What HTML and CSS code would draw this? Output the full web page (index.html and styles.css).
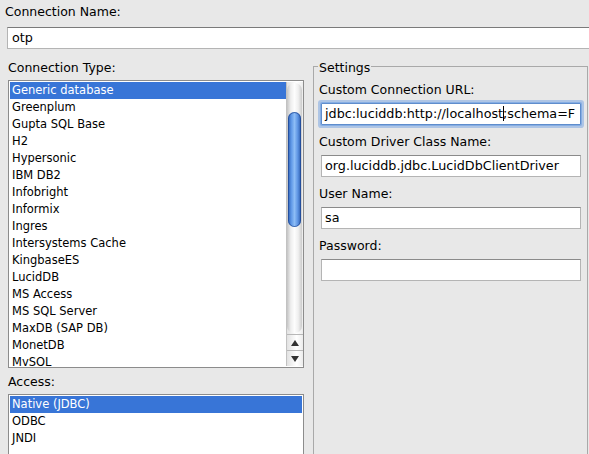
FILE: index.html
```html
<!DOCTYPE html>
<html lang="en">
<head>
  <meta charset="UTF-8" />
  <title>Database Connection</title>
  <link rel="stylesheet" href="styles.css">
</head>
<body>
  <!-- Connection name -->
  <div class="label name-label">Connection Name:</div>
  <div class="field name-field">otp</div>

  <div class="main">
    <!-- Left column: type + access lists -->
    <div class="left">
      <div class="label list-label">Connection Type:</div>
      <div class="listbox type-list">
        <ul class="items">
          <li class="selected">Generic database</li>
          <li>Greenplum</li>
          <li>Gupta SQL Base</li>
          <li>H2</li>
          <li>Hypersonic</li>
          <li>IBM DB2</li>
          <li>Infobright</li>
          <li>Informix</li>
          <li>Ingres</li>
          <li>Intersystems Cache</li>
          <li>KingbaseES</li>
          <li>LucidDB</li>
          <li>MS Access</li>
          <li>MS SQL Server</li>
          <li>MaxDB (SAP DB)</li>
          <li>MonetDB</li>
          <li>MySQL</li>
        </ul>
        <div class="scrollbar">
          <div class="track"><div class="thumb"></div></div>
          <div class="arrow"><span class="tri up"></span></div>
          <div class="arrow"><span class="tri down"></span></div>
        </div>
      </div>
      <div class="label access-label">Access:</div>
      <div class="listbox access-list">
        <ul class="items">
          <li class="selected">Native (JDBC)</li>
          <li>ODBC</li>
          <li>JNDI</li>
        </ul>
      </div>
    </div>

    <!-- Right column: settings -->
    <fieldset class="settings">
      <legend>Settings</legend>
      <div class="label">Custom Connection URL:</div>
      <div class="field focused">jdbc:luciddb:http://localhost<span class="caret"></span>;schema=F</div>
      <div class="label">Custom Driver Class Name:</div>
      <div class="field">org.luciddb.jdbc.LucidDbClientDriver</div>
      <div class="label">User Name:</div>
      <div class="field">sa</div>
      <div class="label">Password:</div>
      <div class="field"></div>
    </fieldset>
  </div>
</body>
</html>
```

FILE: styles.css
```css
/* Global */
html, body {
  margin: 0;
  padding: 0;
  height: 454px;
  overflow: hidden;
}
body {
  background: #e8e8e8;
  color: #000;
  font-family: 'DejaVu Sans', sans-serif;
}
.label {
  font-size: 12.5px;
  line-height: 16px;
  white-space: nowrap;
}
/* Text fields */
.field {
  box-sizing: border-box;
  height: 22px;
  background: #fff;
  border: 1px solid #b4b4b4;
  border-top-color: #8a8a8a;
  padding: 0 3px;
  font-size: 12.75px;
  line-height: 20px;
  white-space: nowrap;
  overflow: hidden;
}
.field.focused {
  border-color: #5f8dcc;
  box-shadow: 0 0 0 1px #86aee4, 0 0 0 3px rgba(125, 168, 226, 0.55);
  border-radius: 1px;
}
.caret {
  display: inline-block;
  width: 1px;
  height: 15px;
  background: #000;
  vertical-align: -3px;
  margin-right: -1px;
}
/* Connection name */
.name-label {
  padding: 4px 0 0 5px;
}
.name-field {
  margin: 7px 0 0 7px;
  width: 600px;
  padding-left: 4px;
  border-top-color: #7a7a7a;
}
/* Main area */
.main {
  display: flex;
  padding-left: 8px;
}
.left {
  width: 296px;
  flex: none;
}
.list-label {
  margin: 11px 0 4px;
}
.access-label {
  margin: 6px 0 4px;
}
/* List boxes */
.listbox {
  box-sizing: border-box;
  display: flex;
  background: #fff;
  border: 1px solid #8c8c8c;
  padding: 1px 0 1px 1px;
}
.type-list {
  height: 288px;
}
.access-list {
  height: 90px;
  padding-right: 1px;
}
.items {
  list-style: none;
  margin: 0;
  padding: 0;
  flex: 1;
  overflow: hidden;
}
.items li {
  height: 17px;
  padding-left: 2px;
  font-size: 11.5px;
  line-height: 17px;
  white-space: nowrap;
}
.items li.selected {
  background: #3875d7;
  color: #fff;
}
/* Aqua scrollbar */
.scrollbar {
  width: 16px;
  display: flex;
  flex-direction: column;
  border-left: 1px solid #c2c2c2;
  background: linear-gradient(to right, #e2e2e2, #f8f8f8 45%, #fff 60%, #ececec);
}
.track {
  flex: 1;
  margin: 1px 1px 1px 0;
  padding-top: 29px;
  border-radius: 7px;
  background: linear-gradient(to right, #c4c4c4, #eeeeee 25%, #fdfdfd 50%, #efefef 75%, #cbcbcb);
}
.thumb {
  height: 115px;
  margin: 0 1px;
  border-radius: 7px;
  background: linear-gradient(to right, #2c5fb4, #5e97e6 25%, #8dbdf6 50%, #5d94e3 75%, #2b5aab);
  box-shadow: inset 0 0 0 1px rgba(30, 70, 145, 0.7);
}
.arrow {
  height: 15px;
  display: flex;
  align-items: center;
  justify-content: center;
  border-top: 1px solid #b8b8b8;
}
.tri {
  width: 0;
  height: 0;
  border-left: 4px solid transparent;
  border-right: 4px solid transparent;
}
.tri.up {
  border-bottom: 6px solid #333;
}
.tri.down {
  border-top: 6px solid #333;
}
/* Settings group */
.settings {
  box-sizing: border-box;
  width: 275px;
  height: 420px;
  margin: 9px 0 0 9px;
  padding: 0 6px 0 5px;
  border: 1px solid #a9a9a9;
  min-width: 0;
}
.settings legend {
  font-size: 12.5px;
  line-height: 14px;
  padding: 3px 1px 0;
  margin-left: -1px;
}
.settings .label {
  margin: 0 0 5px;
}
.settings .label:first-of-type {
  margin-top: 7px;
}
.settings .field {
  margin: 0 0 9px 2px;
  width: 260px;
}
```
